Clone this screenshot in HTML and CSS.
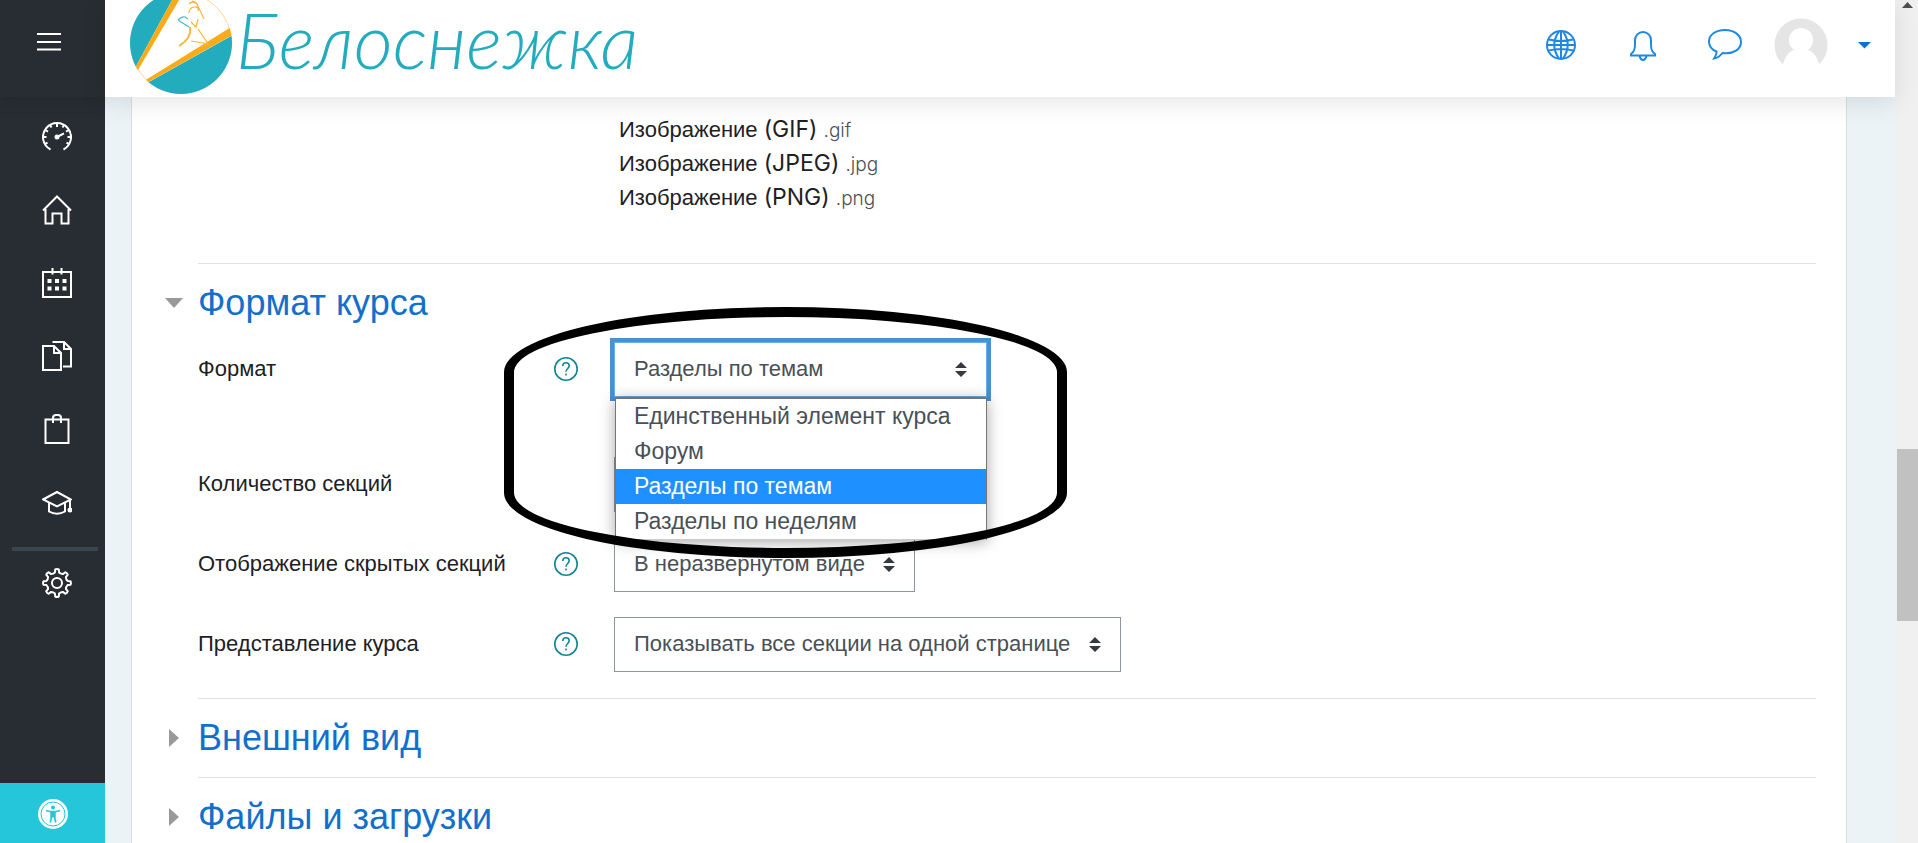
FILE: index.html
```html
<!DOCTYPE html>
<html lang="ru">
<head>
    <meta charset="UTF-8">
    <meta name="viewport" content="width=device-width, initial-scale=1.0">
    <title>Белоснежка</title>
    <link rel="stylesheet" href="styles.css">
</head>
<body>
    <div class="page">
        <!-- Sidebar -->
        <nav class="sidebar">
            <button class="menu-toggle" type="button" aria-label="Меню">
                <svg width="24" height="18" viewBox="0 0 24 18"><path d="M0 1h24M0 9h24M0 16.500h24" stroke="#fff" stroke-width="2"/></svg>
            </button>
            <ul class="side-links">
                <li><a href="#" aria-label="Личный кабинет">
                    <svg class="icon" viewBox="0 0 30 30"><path d="M8.500 27.500A14 14 0 1 1 21.500 27.500"/><path d="M15 1v4M8 3l1.500 2.500M22 3l-1.500 2.500M3.200 8l2.800 1.600M26.800 8l-2.800 1.600M1 15h3.500M29 15h-3.500M3 22l2.500-1.300M27 22l-2.500-1.300M15 15l7-3.600"/><circle cx="15" cy="15" r="1.500" fill="#fff"/></svg>
                </a></li>
                <li><a href="#" aria-label="Домашняя страница">
                    <svg class="icon" viewBox="0 0 30 30"><path d="M1 15.500L15 1.500l14 14M3.500 14v14.500h7V18.500h9v10h7V14"/></svg>
                </a></li>
                <li><a href="#" aria-label="Календарь">
                    <svg class="icon" viewBox="0 0 30 30"><path d="M1 4h28v25H1zM10.500 0v6.500M19.500 0v6.500"/><path d="M5.500 13h4M13 13h4M20.500 13h4M5.500 20.500h4M13 20.500h4M20.500 20.500h4" stroke-width="4"/></svg>
                </a></li>
                <li><a href="#" aria-label="Личные файлы">
                    <svg class="icon" viewBox="0 0 30 30"><path d="M1 5h11l7 7v17H1zM12 5v7h7M10.500 1H22l7 7v17.500h-8M22 1v7h7"/></svg>
                </a></li>
                <li><a href="#" aria-label="Банк контента">
                    <svg class="icon" viewBox="0 0 30 30"><path d="M3.500 5.500h23V29h-23zM11 9V4a3 3 0 0 1 3-3h2a3 3 0 0 1 3 3v5"/></svg>
                </a></li>
                <li><a href="#" aria-label="Мои курсы">
                    <svg class="icon" viewBox="0 0 30 30"><path d="M1 12.500L15 5l14 7.500L15 19.500zM7 15.500v9q8 4.500 16 0v-9M28 13v8"/><circle cx="28" cy="23" r="1.500" fill="#fff"/></svg>
                </a></li>
                <li class="settings"><a href="#" aria-label="Администрирование">
                    <svg class="icon" viewBox="0 0 30 30"><circle cx="15" cy="15" r="5"/><path d="M12.900 4.500L13.200 1.500Q15 .6 16.800 1.500L17.100 4.500Q18.700 6 20.900 6.100L23.300 4.200Q25.200 4.800 25.800 6.700L23.900 9.100Q24 11.300 25.500 12.900L28.500 13.200Q29.400 15 28.500 16.800L25.500 17.100Q24 18.700 23.900 20.900L25.800 23.300Q25.200 25.200 23.300 25.800L20.900 23.900Q18.700 24 17.100 25.500L16.800 28.500Q15 29.400 13.200 28.500L12.900 25.500Q11.300 24 9.100 23.900L6.700 25.800Q4.800 25.200 4.200 23.300L6.100 20.900Q6 18.700 4.500 17.100L1.500 16.800Q.6 15 1.500 13.200L4.500 12.900Q6 11.300 6.100 9.100L4.200 6.700Q4.800 4.800 6.700 4.200L9.100 6.100Q11.300 6 12.900 4.500Z" stroke-linejoin="round"/></svg>
                </a></li>
            </ul>
            <button class="accessibility" type="button" aria-label="Специальные возможности">
                <svg width="30" height="30" viewBox="0 0 30 30"><circle cx="15" cy="15" r="15" fill="#fff"/><circle cx="15" cy="15" r="12" fill="none" stroke="#26c6da" stroke-width="1"/><circle cx="15" cy="8.500" r="2" fill="#26c6da"/><path d="M8 11.500l4.800 1.200h4.400L22 11.500M13.300 12.500v6l-1 5M16.700 12.500v6l1 5" fill="none" stroke="#26c6da" stroke-width="1.700"/><path d="M12.500 12h5v6.500h-5z" fill="#26c6da"/></svg>
            </button>
        </nav>

        <div class="main">
            <!-- Header -->
            <header class="topbar">
                <a class="logo" href="#">
                    <svg width="102" height="97" viewBox="0 0 102 97">
                        <defs><clipPath id="badge"><circle cx="51" cy="43" r="51"/></clipPath></defs>
                        <circle cx="51" cy="43" r="50.500" fill="#fff" stroke="#fcd9a0"/>
                        <g clip-path="url(#badge)">
                            <path d="M-5 -10H47.500L4 70H-5z" fill="#23abbe"/>
                            <path d="M110 31L10 87V97H110z" fill="#23abbe"/>
                            <path d="M47.500 -10H55L8 70L4 70z" fill="#fbab18"/>
                            <path d="M106 24L14 81L15 84L106 33z" fill="#fbab18"/>
                        </g>
                        <g fill="none" stroke="#fbb53c" stroke-width="1.200">
                            <path d="M60 27Q62 38 49 46" stroke-width="1.800"/>
                            <path d="M61 22l5 5 2-8M68 29l11 16M61 41l18 3-9 3M59 4q4-4 8 0l7 15M59 13q0-5 5-6t4 4M62 1q6 1 6 6"/>
                            <path d="M48 20q4-4 7-3l3 2M48 20l11 7" stroke="#4ab9c9"/>
                        </g>
                    </svg>
                    <span class="logo-text">Белоснежка</span>
                </a>
                <div class="top-actions">
                    <button type="button" aria-label="Язык">
                        <svg width="30" height="30" viewBox="0 0 30 30"><circle cx="15" cy="15" r="14"/><path d="M15 1v28M1 15h28M3 9.500q12 3 24 0M3 20.500q12-3 24 0M13 1.500Q3.500 15 13 28.500M17 1.500Q26.500 15 17 28.500"/></svg>
                    </button>
                    <button type="button" aria-label="Уведомления">
                        <svg width="30" height="30" viewBox="0 0 30 30"><path d="M7 14V10a8 8 0 0 1 16 0v4c0 6 1 8 4 10v1.500H3V24c3-2 4-4 4-10zM11.500 26q1 4 3.500 4t3.500-4"/></svg>
                    </button>
                    <button type="button" aria-label="Сообщения">
                        <svg width="36" height="32" viewBox="0 0 36 32"><path d="M18 1C8.500 1 2 6 2 12.500c0 5 3 8.200 7.500 10 .5 3-1 4.500-2.500 7 4.500-.500 6.500-3 8.500-5.500C27 25.500 34 20 34 13S27 1 18 1z"/></svg>
                    </button>
                    <button class="user-menu" type="button" aria-label="Меню пользователя">
                        <svg class="avatar" width="54" height="54" viewBox="0 0 54 54"><circle cx="27" cy="27" r="26.500" fill="#e5e5e5"/><circle cx="27" cy="22" r="12" fill="#fff"/><path d="M7 54Q11 33 21 32h12q10 1 14 22z" fill="#fff"/></svg>
                        <svg class="caret" width="13" height="7" viewBox="0 0 13 7"><path d="M0 0h13L6.500 6.500z"/></svg>
                    </button>
                </div>
            </header>

            <!-- Course settings form -->
            <form class="card">
                <ul class="file-types">
                    <li>Изображение <span class="latin">(GIF)</span> <small>.gif</small></li>
                    <li>Изображение <span class="latin">(JPEG)</span> <small>.jpg</small></li>
                    <li>Изображение <span class="latin">(PNG)</span> <small>.png</small></li>
                </ul>

                <section class="group">
                    <h3><a class="open" href="#">Формат курса</a></h3>
                    <div class="rows">
                        <div class="row row-format">
                            <div class="row-label">
                                <label for="format">Формат</label>
                                <button class="help" type="button" aria-label="Справка"><svg width="24" height="24" viewBox="0 0 24 24"><circle cx="12" cy="12" r="11.200"/><path d="M8.800 9q0-3.200 3.200-3.200t3.200 3c0 2.700-3.200 2.700-3.200 6"/><path d="M12 16.500v2"/></svg></button>
                            </div>
                            <div class="field">
                                <select id="format" class="focused">
                                    <option>Единственный элемент курса</option>
                                    <option>Форум</option>
                                    <option selected>Разделы по темам</option>
                                    <option>Разделы по неделям</option>
                                </select>
                                <ul class="options">
                                    <li>Единственный элемент курса</li>
                                    <li>Форум</li>
                                    <li class="active">Разделы по темам</li>
                                    <li>Разделы по неделям</li>
                                </ul>
                                <div class="ring"></div>
                            </div>
                        </div>
                        <div class="row">
                            <div class="row-label">
                                <label for="sections">Количество секций</label>
                            </div>
                            <div class="field">
                                <select id="sections"><option>4</option></select>
                            </div>
                        </div>
                        <div class="row">
                            <div class="row-label">
                                <label for="hidden-sections">Отображение скрытых секций</label>
                                <button class="help" type="button" aria-label="Справка"><svg width="24" height="24" viewBox="0 0 24 24"><circle cx="12" cy="12" r="11.200"/><path d="M8.800 9q0-3.200 3.200-3.200t3.200 3c0 2.700-3.200 2.700-3.200 6"/><path d="M12 16.500v2"/></svg></button>
                            </div>
                            <div class="field">
                                <select id="hidden-sections"><option>В неразвернутом виде</option></select>
                            </div>
                        </div>
                        <div class="row">
                            <div class="row-label">
                                <label for="layout">Представление курса</label>
                                <button class="help" type="button" aria-label="Справка"><svg width="24" height="24" viewBox="0 0 24 24"><circle cx="12" cy="12" r="11.200"/><path d="M8.800 9q0-3.200 3.200-3.200t3.200 3c0 2.700-3.200 2.700-3.200 6"/><path d="M12 16.500v2"/></svg></button>
                            </div>
                            <div class="field">
                                <select id="layout"><option>Показывать все секции на одной странице</option></select>
                            </div>
                        </div>
                    </div>
                </section>

                <section class="group">
                    <h3><a href="#">Внешний вид</a></h3>
                </section>

                <section class="group">
                    <h3><a href="#">Файлы и загрузки</a></h3>
                </section>
            </form>
        </div>

        <!-- Scrollbar -->
        <div class="scrollbar">
            <svg width="11" height="6" viewBox="0 0 11 6"><path d="M5.500 0L11 6H0z"/></svg>
            <div class="thumb"></div>
        </div>
    </div>
</body>
</html>
```

FILE: styles.css
```css
/* Global Styles */
* {
    box-sizing: border-box;
}

body {
    margin: 0;
    font-family: "Liberation Sans", Arial, sans-serif;
    font-size: 22px;
    color: #1d2125;
    background-color: #ebf3f7;
}

ul {
    list-style: none;
    margin: 0;
    padding: 0;
}

button {
    background: none;
    border: 0;
    padding: 0;
    cursor: pointer;
}

svg {
    display: block;
}

.page {
    display: flex;
    height: 100vh;
    overflow: hidden;
}

/* Sidebar */
.sidebar {
    display: flex;
    flex-direction: column;
    width: 105px;
    flex-shrink: 0;
    background-color: #282c33;
}

.menu-toggle {
    height: 97px;
    padding: 0 0 14px 37px;
    box-shadow: 0 6px 16px rgba(0, 0, 0, 0.1);
}

.side-links {
    flex: 1;
    padding-top: 3px;
}

.side-links a {
    display: flex;
    align-items: center;
    height: 73px;
    padding-left: 42px;
}

.icon {
    width: 30px;
    height: 30px;
    fill: none;
    stroke: #fff;
    stroke-width: 2;
}

.settings {
    margin: 9px 7px 0 12px;
    border-top: 4px solid #37474f;
}

.settings a {
    height: 64px;
    padding-left: 30px;
}

.accessibility {
    display: flex;
    align-items: center;
    justify-content: center;
    height: 60px;
    padding-top: 2px;
    background-color: #26c6da;
}

/* Header */
.main {
    flex: 1;
    display: flex;
    flex-direction: column;
    min-width: 0;
}

.topbar {
    position: relative;
    z-index: 5;
    display: flex;
    justify-content: space-between;
    flex-shrink: 0;
    height: 97px;
    padding: 0 24px 0 25px;
    background-color: #fff;
    box-shadow: 0 6px 24px rgba(0, 0, 0, 0.1);
}

.logo {
    display: flex;
    text-decoration: none;
}

.logo-text {
    padding-left: 4px;
    font-family: Lato, "Open Sans", sans-serif;
    font-size: 76px;
    font-style: italic;
    font-weight: 300;
    line-height: 80px;
    color: #23abbe;
}

.top-actions {
    display: flex;
    align-items: center;
    padding-bottom: 7px;
}

.top-actions button {
    display: flex;
    align-items: center;
    justify-content: center;
    width: 82px;
    height: 60px;
}

.top-actions svg {
    fill: none;
    stroke: #1e88e5;
    stroke-width: 2;
    overflow: visible;
}

.top-actions .user-menu {
    width: auto;
    gap: 30px;
    margin-left: 8px;
}

.top-actions .avatar {
    stroke: none;
}

.top-actions .caret {
    fill: #1170cc;
    stroke: none;
}

/* Form card */
.card {
    flex: 1;
    margin: 0 48px 0 26px;
    padding: 15px 30px 0 66px;
    background-color: #fff;
    border: 1px solid #d5dfe4;
    border-width: 0 1px;
}

.file-types {
    padding: 0 0 49px 421px;
    line-height: 34px;
}

.file-types li {
    height: 34px;
}

.file-types .latin {
    font-family: Inter, sans-serif;
    font-size: 23px;
}

.file-types small {
    font-family: Inter, sans-serif;
    font-size: 19px;
    font-weight: 300;
    color: #495057;
}

.group {
    border-top: 1px solid #dee2e6;
}

.group h3 {
    margin: 0;
    font-size: 36px;
    font-weight: 400;
    line-height: 78px;
}

.group h3 a {
    display: flex;
    align-items: center;
    margin-left: -33px;
    color: #1170cc;
    text-decoration: none;
}

.group h3 a::before {
    content: "";
    width: 10px;
    height: 18px;
    margin: 0 19px 0 4px;
    background-color: #999;
    clip-path: polygon(0 0, 100% 50%, 0 100%);
}

.group h3 a.open::before {
    width: 18px;
    height: 10px;
    margin: 0 15px 0 0;
    clip-path: polygon(0 0, 100% 0, 50% 100%);
}

.rows {
    display: flex;
    flex-direction: column;
    gap: 25px;
    padding-bottom: 26px;
}

.row {
    display: grid;
    grid-template-columns: 416px 1fr;
    align-items: center;
}

.row-format {
    margin-bottom: 35px;
}

.row-label {
    display: flex;
    align-items: center;
    justify-content: space-between;
    padding: 0 36px 2px 0;
}

.help svg {
    fill: none;
    stroke: #138496;
    stroke-width: 1.6;
}

.field {
    position: relative;
    display: flex;
    justify-self: start;
}

select {
    appearance: none;
    height: 55px;
    padding: 0 49px 2px 19px;
    font-family: inherit;
    font-size: 22px;
    color: #495057;
    border: 1px solid #8f959e;
    border-radius: 0;
    outline: 0;
    background: #fff url("data:image/svg+xml,%3Csvg xmlns='http://www.w3.org/2000/svg' viewBox='0 0 12 15'%3E%3Cpath fill='%23343a40' d='M6 0l6 6H0zM6 15l6-6H0z'/%3E%3C/svg%3E") no-repeat right 19px center / 12px 15px;
}

select.focused {
    border-color: #66afe9;
    box-shadow: 0 0 0 4px #4a90d2;
}

/* Opened list */
.options {
    position: absolute;
    z-index: 1;
    top: 56px;
    left: 1px;
    right: 0;
    border: 1px solid #767676;
    border-bottom-color: #ccc;
    background-color: #fff;
    box-shadow: 0 2px 14px rgba(0, 0, 0, 0.35);
}

.options li {
    padding-left: 18px;
    font-size: 23px;
    line-height: 35px;
    color: #495057;
    white-space: nowrap;
}

.options .active {
    background-color: #1e90ff;
    color: #fff;
}

.ring {
    position: absolute;
    z-index: 2;
    top: -35px;
    left: -110px;
    width: 563px;
    height: 251px;
    border: 10px solid #000;
    border-radius: 50% / 26%;
    pointer-events: none;
}

/* Scrollbar */
.scrollbar {
    display: flex;
    flex-direction: column;
    align-items: center;
    width: 23px;
    flex-shrink: 0;
    padding: 2px 0 0 2px;
    background-color: #f0f0f0;
}

.scrollbar svg {
    fill: #505050;
}

.thumb {
    width: 100%;
    height: 172px;
    margin-top: 441px;
    background-color: #c1c1c1;
}
```
